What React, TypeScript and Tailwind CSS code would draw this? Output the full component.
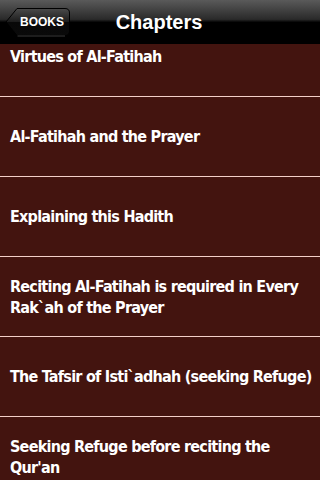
import React from "react";

const chapters = [
  "Virtues of Al-Fatihah",
  "Al-Fatihah and the Prayer",
  "Explaining this Hadith",
  "Reciting Al-Fatihah is required in Every Rak`ah of the Prayer",
  "The Tafsir of Isti`adhah (seeking Refuge)",
  "Seeking Refuge before reciting the Qur'an",
];

function BackButton() {
  return (
    <div className="relative w-[66px] h-[30px]">
      <svg className="absolute inset-0" width="66" height="30" viewBox="0 0 66 30">
        <defs>
          <linearGradient id="bb" x1="0" y1="0" x2="0" y2="1">
            <stop offset="0" stopColor="#4a4a4a" />
            <stop offset="0.5" stopColor="#1c1c1c" />
            <stop offset="0.51" stopColor="#080808" />
            <stop offset="1" stopColor="#0a0a0a" />
          </linearGradient>
        </defs>
        <path
          d="M1 15 L12 1.5 H60 Q64.5 1.5 64.5 6 V24 Q64.5 28.5 60 28.5 H12 Z"
          fill="url(#bb)"
          stroke="#000"
          strokeWidth="1"
        />
        <path d="M12.5 29 H60" stroke="#3a3a3a" strokeWidth="1" />
      </svg>
      <span className="absolute inset-0 flex items-center justify-center pl-[8px] text-white text-[12px] font-bold font-['Liberation_Sans',sans-serif]">
        BOOKS
      </span>
    </div>
  );
}

export default function App() {
  return (
    <div className="w-[320px] h-[480px] overflow-hidden bg-[#43140f] flex flex-col">
      <div className="relative z-10 h-[44px] shrink-0 flex items-center px-[5px] bg-[linear-gradient(to_bottom,#5a5a5a_0%,#2a2a2a_45%,#000_52%,#000_100%)] border-b border-[#000]">
        <BackButton />
        <div className="absolute inset-0 flex items-center justify-center pointer-events-none">
          <span className="text-white text-[20px] font-bold font-['Liberation_Sans',sans-serif] ml-[-2px]">
            Chapters
          </span>
        </div>
      </div>
      <div className="flex-1 overflow-hidden">
        <div className="mt-[-27px] flex flex-col">
          {chapters.map((c, i) => (
            <div
              key={i}
              className="h-[80px] flex items-center pl-[10px] pr-[2px] border-b border-[#f3cfc8]"
            >
              <span className="text-white text-[16px] leading-[21px] tracking-[-0.75px] font-bold font-['DejaVu_Sans_Condensed',sans-serif]">
                {c}
              </span>
            </div>
          ))}
        </div>
      </div>
    </div>
  );
}
